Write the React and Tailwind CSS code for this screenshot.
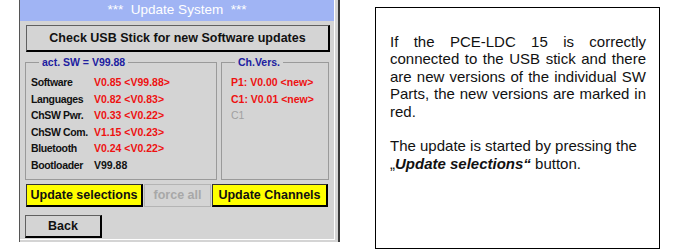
import React from 'react';

const swRows = [
  ['Software', 'V0.85 <V99.88>', true],
  ['Languages', 'V0.82 <V0.83>', true],
  ['ChSW Pwr.', 'V0.33 <V0.22>', true],
  ['ChSW Com.', 'V1.15 <V0.23>', true],
  ['Bluetooth', 'V0.24 <V0.22>', true],
  ['Bootloader', 'V99.88', false],
];

const chRows = [
  ['P1: V0.00 <new>', true],
  ['C1: V0.01 <new>', true],
  ['C1', false],
];

export default function App() {
  return (
    <div className="w-[674px] h-[252px] bg-white flex items-start font-['Liberation_Sans',Arial,sans-serif]">
      {/* device screen */}
      <div className="ml-[19px] w-[321px] h-[242px] bg-[#d4d4d4] border-l border-l-[#555] border-r-2 border-r-[#3a3a3a] pr-[3px] pb-[2px]">
        <div className="h-full flex flex-col border-r border-b border-white">
          <div className="h-[21px] bg-[#a0b4f4] text-white text-[13.5px] flex items-center justify-center whitespace-pre">
            ***  Update System  ***
          </div>

          <button className="ml-[6px] mt-[4px] w-[304px] h-[27px] bg-[#d4d4d4] border border-[#606060] border-b-2 border-r-2 border-b-black border-r-black text-[12.5px] font-bold text-[#111] flex items-center justify-center">
            Check USB Stick for new Software updates
          </button>

          <div className="flex ml-[5px] mt-[4px] gap-[4px]">
            <fieldset className="w-[192px] h-[124px] border border-[#9a9a9a] px-[5px]">
              <legend className="ml-[8px] px-[3px] text-[10.5px] leading-[12px] font-bold text-[#2020a0]">
                act. SW = V99.88
              </legend>
              <div className="pt-[6px] text-[10.5px] leading-[16.5px] font-bold">
                {swRows.map(([label, val, isNew]) => (
                  <div key={label} className="flex">
                    <span className="w-[63px] text-[#111] tracking-[-0.35px]">{label}</span>
                    <span className={isNew ? 'text-[#ee1111]' : 'text-[#111]'}>{val}</span>
                  </div>
                ))}
              </div>
            </fieldset>

            <fieldset className="w-[108px] h-[124px] border border-[#9a9a9a] px-[9px]">
              <legend className="ml-[4px] px-[3px] text-[10.5px] leading-[12px] font-bold text-[#2020a0]">
                Ch.Vers.
              </legend>
              <div className="pt-[6px] text-[10.5px] leading-[16.5px] font-bold">
                {chRows.map(([txt, isNew], i) => (
                  <div key={i} className={isNew ? 'text-[#ee1111]' : 'text-[#a0a0a0] font-normal'}>
                    {txt}
                  </div>
                ))}
              </div>
            </fieldset>
          </div>

          <div className="flex ml-[6px] mt-[4px] gap-[1px]">
            <button className="w-[117px] h-[23px] bg-[#ffff00] border border-[#333] border-b-2 border-r-2 border-b-black border-r-black text-[12.5px] font-bold text-[#111] flex items-center justify-center">
              Update selections
            </button>
            <button className="w-[67px] h-[23px] bg-[#d4d4d4] border border-[#b4b4b4] text-[12.5px] font-bold text-[#a8a8a8] flex items-center justify-center">
              force all
            </button>
            <button className="w-[116px] h-[23px] bg-[#ffff00] border border-[#333] border-b-2 border-r-2 border-b-black border-r-black text-[12.5px] font-bold text-[#111] flex items-center justify-center">
              Update Channels
            </button>
          </div>

          <button className="ml-[5px] mt-[8px] w-[77px] h-[23px] bg-[#d4d4d4] border border-[#606060] border-b-2 border-r-2 border-b-black border-r-black text-[12.5px] font-bold text-[#111] flex items-center justify-center">
            Back
          </button>
        </div>
      </div>

      {/* description box */}
      <div className="ml-[35px] mt-[7px] w-[285px] h-[242px] border border-black pl-[14px] pr-[13px] pt-[25px] text-[15px] leading-[17.4px] text-[#111]">
        <div className="text-justify [text-align-last:justify]">If the PCE-LDC 15 is correctly</div>
        <div className="text-justify [text-align-last:justify]">connected to the USB stick and there</div>
        <div className="text-justify [text-align-last:justify]">are new versions of the individual SW</div>
        <div className="text-justify [text-align-last:justify]">Parts, the new versions are marked in</div>
        <div>red.</div>
        <div className="h-[17.4px]"></div>
        <div>The update is started by pressing the</div>
        <div>
          „<span className="font-bold italic">Update selections“</span> button.
        </div>
      </div>
    </div>
  );
}
